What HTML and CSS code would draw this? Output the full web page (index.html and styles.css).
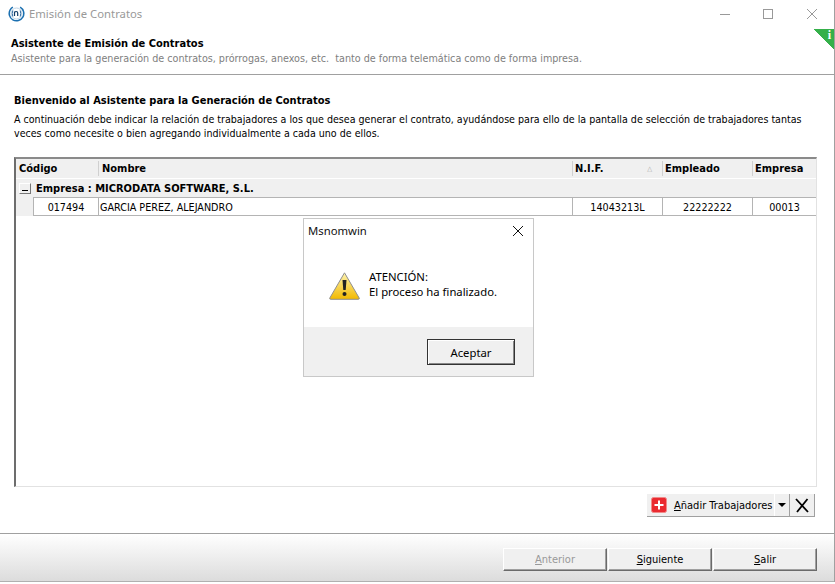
FILE: index.html
```html
<!DOCTYPE html>
<html lang="es">
<head>
<meta charset="utf-8">
<title>Emisión de Contratos</title>
<link rel="stylesheet" href="styles.css">
</head>
<body>
<div class="window">
  <div class="titlebar">
    <svg class="app-icon" width="17" height="17" viewBox="0 0 17 17">
      <circle cx="8.500" cy="8.500" r="7.300" fill="none" stroke="#1a6fb0" stroke-width="1.500" stroke-dasharray="38 8" transform="rotate(-60 8.500 8.500)"/>
      <circle cx="8.500" cy="8.500" r="5.500" fill="#fff" stroke="#a9c6de" stroke-width="0.800"/>
      <path d="M4.800 5.500q-1.200 3 0 6M12.200 5.500q1.200 3 0 6" fill="none" stroke="#1a5a96" stroke-width="0.900"/>
      <path d="M6.500 11V6.500M6.500 7.500c.5-.7 1-1 1.700-1 1 0 1.500.6 1.500 1.600V11" fill="none" stroke="#123e6a" stroke-width="1.200"/>
    </svg>
    <span class="title-text">Emisión de Contratos</span>
    <div class="win-controls">
      <svg width="12" height="12" viewBox="0 0 12 12"><path d="M2 6.500h10" stroke="#999" stroke-width="1"/></svg>
      <svg width="12" height="12" viewBox="0 0 12 12"><rect x="1.500" y="1.500" width="9" height="9" fill="none" stroke="#999"/></svg>
      <svg width="12" height="12" viewBox="0 0 12 12"><path d="M1 1l10 10M11 1L1 11" stroke="#999" stroke-width="1"/></svg>
    </div>
  </div>
  <header class="wizard-head">
    <div class="head-title">Asistente de Emisión de Contratos</div>
    <div class="head-sub">Asistente para la generación de contratos, prórrogas, anexos, etc.&nbsp; tanto de forma telemática como de forma impresa.</div>
    <div class="info-corner"><span>i</span></div>
  </header>
  <main class="content">
    <h1 class="welcome">Bienvenido al Asistente para la Generación de Contratos</h1>
    <p class="intro">A continuación debe indicar la relación de trabajadores a los que desea generar el contrato, ayudándose para ello de la pantalla de selección de trabajadores tantas veces como necesite o bien agregando individualmente a cada uno de ellos.</p>
    <section class="grid">
      <div class="grid-row grid-head">
        <div class="c c1">Código</div>
        <div class="c c2">Nombre</div>
        <div class="c c3">N.I.F.<span class="sort">△</span></div>
        <div class="c c4">Empleado</div>
        <div class="c c5">Empresa</div>
      </div>
      <div class="group-row">
        <span class="collapse"></span>
        <span class="group-label">Empresa : MICRODATA SOFTWARE, S.L.</span>
      </div>
      <div class="grid-row data-row">
        <div class="indent"></div>
        <div class="c c1b center">017494</div>
        <div class="c c2">GARCIA PEREZ, ALEJANDRO</div>
        <div class="c c3 center">14043213L</div>
        <div class="c c4 center">22222222</div>
        <div class="c c5 center">00013</div>
      </div>
    </section>
    <div class="toolbar-wrap">
      <div class="toolbar">
        <div class="tb-add">
          <svg width="16" height="16" viewBox="0 0 16 16"><rect x="0.500" y="0.500" width="15" height="15" rx="2" fill="#ea2a30" stroke="#f08a8a"/><path d="M8 3.500v9M3.500 8h9" stroke="#fff" stroke-width="2"/></svg>
          <span class="tb-label"><u>A</u>ñadir Trabajadores</span>
        </div>
        <div class="tb-drop"><span class="caret"></span></div>
        <div class="tb-del">
          <svg width="14" height="15" viewBox="0 0 14 15"><path d="M1 1l12 13M12.500 1L2 14" stroke="#000" stroke-width="1.800"/></svg>
        </div>
      </div>
    </div>
  </main>
  <footer class="footer">
    <button class="btn disabled" type="button"><u>A</u>nterior</button>
    <button class="btn" type="button"><u>S</u>iguiente</button>
    <button class="btn" type="button"><u>S</u>alir</button>
  </footer>
  <div class="dialog">
    <div class="dlg-title">
      <span>Msnomwin</span>
      <svg width="12" height="12" viewBox="0 0 12 12"><path d="M1 1l10 10M11 1L1 11" stroke="#111" stroke-width="1"/></svg>
    </div>
    <div class="dlg-body">
      <svg width="31" height="28" viewBox="0 0 31 28">
        <defs><linearGradient id="warn" x1="0" y1="0" x2="0" y2="1"><stop offset="0" stop-color="#fdf3b0"/><stop offset="1" stop-color="#f2b900"/></linearGradient></defs>
        <path d="M15.500 0.800L30.200 26Q30.800 27.300 29 27.300H2Q0.200 27.300 0.800 26Z" fill="url(#warn)" stroke="#8f8f8f"/>
        <path d="M13.500 8h4l-.8 10h-2.400z" fill="#222"/><circle cx="15.500" cy="22" r="2" fill="#222"/>
      </svg>
      <div class="dlg-msg">
        <div>ATENCIÓN:</div>
        <div>El proceso ha finalizado.</div>
      </div>
    </div>
    <div class="dlg-foot"><button class="btn dlg-btn" type="button">Aceptar</button></div>
  </div>
</div>
</body>
</html>
```
FILE: styles.css
```css
* { box-sizing: border-box; }
html, body { margin: 0; padding: 0; }
body { width: 835px; height: 584px; background: #fff; font-family: "DejaVu Sans Condensed", "DejaVu Sans", sans-serif; font-stretch: condensed; font-size: 10.7px; color: #000; overflow: hidden; }
.window { position: relative; width: 835px; height: 582px; border-right: 1px solid #a0a0a0; display: flex; flex-direction: column; background: #fff; }
.titlebar { height: 27px; display: flex; align-items: center; padding-left: 8px; flex: none; }
.app-icon { flex: none; }
.title-text { margin-left: 4px; font: 11.3px "Noto Sans", sans-serif; color: #999; }
.win-controls { margin-left: auto; align-self: flex-start; display: flex; gap: 32px; padding: 8px 16px 0 0; }
.wizard-head { position: relative; height: 48px; border-bottom: 1px solid #a0a0a0; padding: 9px 0 0 11px; flex: none; }
.head-title { font-size: 11px; font-weight: 700; line-height: 15px; }
.head-sub { color: #808080; line-height: 15px; }
.info-corner { position: absolute; right: 0; top: 2px; width: 20px; height: 20px; background: linear-gradient(to top right, transparent 50%, #35b04a 50%); }
.info-corner span { position: absolute; right: 3px; top: -1px; color: #fff; font: 700 12px/14px "Liberation Serif", serif; }
.content { flex: 1; padding: 18px 17px 0 14px; display: flex; flex-direction: column; min-height: 0; }
.welcome { margin: 0; font-size: 11px; font-weight: 700; line-height: 16px; }
.intro { margin: 3px 0 0; font-size: 10.600px; line-height: 14px; width: 800px; }
.grid { margin: 17px 0 0; height: 330px; border: 1px solid #e2e2e2; border-left: 2px solid #6d6d6d; border-top: 2px solid #8a8a8a; flex: none; }
.grid-row { display: flex; }
.grid-head { height: 20px; background: #f0f0f0; font-size: 11px; font-weight: 700; align-items: stretch; border-bottom: 1px solid #fff; }
.c { display: flex; align-items: center; padding-left: 1px; white-space: nowrap; }
.grid-head .c { border-left: 1px solid #d0d0d0; margin: 2px 0; padding-left: 2px; }
.grid-head .c1 { border-left: 0; padding-left: 3px; }
.grid-head .c2 { padding-left: 3px; }
.c1 { width: 82px; }
.c1b { width: 65px; }
.c2 { width: 474px; }
.c3 { width: 90px; position: relative; }
.c4 { width: 90px; }
.c5 { width: 64px; }
.sort { position: absolute; right: 10px; font-size: 7px; font-weight: 400; color: #aaa; }
.group-row { height: 18px; background: #f0f0f0; display: flex; align-items: center; padding-left: 3px; font-size: 11px; font-weight: 700; }
.collapse { width: 12px; height: 11px; position: relative; border: 1px solid; border-color: #fff #777 #777 #fff; background: #f0f0f0; margin-right: 5px; }
.collapse::after { content: ""; position: absolute; left: 2px; top: 6px; width: 6px; height: 1px; background: #000; }
.data-row { height: 19px; background: #f0f0f0; }
.indent { width: 17px; flex: none; background: #f0f0f0; }
.data-row .c { background: #fff; border-left: 1px solid #b4b4b4; border-top: 1px solid #b4b4b4; border-bottom: 1px solid #b4b4b4; padding-top: 1px; }
.center { justify-content: center; padding-left: 0; }
.toolbar-wrap { display: flex; justify-content: flex-end; margin: 7px 2px 0 0; }
.toolbar { display: flex; height: 23px; background: #f0f0f0; border-bottom: 1px solid #a0a0a0; }
.tb-add { display: flex; align-items: center; width: 127px; padding-left: 4px; gap: 7px; white-space: nowrap; font-size: 11px; }
.tb-drop { width: 15px; display: flex; align-items: center; justify-content: center; border-left: 1px solid #fff; }
.caret { width: 0; height: 0; border-style: solid; border-width: 4px 4px 0; border-color: #000 transparent transparent; }
.tb-del { width: 26px; display: flex; align-items: center; justify-content: center; border-left: 1px solid #a0a0a0; border-right: 1px solid #a0a0a0; }
.footer { flex: none; height: 49px; margin-top: auto; border-top: 1px solid #a0a0a0; border-bottom: 1px solid #b0b0b0; background: linear-gradient(#fff, #dcdcdc); display: flex; justify-content: flex-end; align-items: flex-start; gap: 1px; padding: 14px 17px 0 0; }
.btn { width: 104px; height: 23px; padding: 0; font: inherit; font-size: 11px; color: #000; background: #f0f0f0; border: 1px solid; border-color: #fff #6a6a6a #6a6a6a #fff; box-shadow: inset -1px -1px 0 #a0a0a0; }
.btn.disabled { color: #999; }
.dialog { position: absolute; left: 303px; top: 218px; width: 231px; height: 159px; background: #fff; border: 1px solid #c8c8c8; display: flex; flex-direction: column; }
.dlg-title { height: 23px; flex: none; display: flex; align-items: center; justify-content: space-between; padding: 0 9px 0 4px; font: 11.3px "Noto Sans", sans-serif; color: #111; }
.dlg-body { flex: 1; display: flex; align-items: flex-start; padding: 30px 0 0 25px; gap: 9px; }
.dlg-msg { font: 11.3px/15px "Noto Sans", sans-serif; margin-top: -3px; }
.dlg-foot { height: 49px; flex: none; background: #f0f0f0; display: flex; justify-content: flex-end; align-items: flex-start; padding: 12px 18px 0 0; }
.dlg-btn { width: 88px; height: 26px; font: 11.3px "Noto Sans", sans-serif; border: 1px solid #333; box-shadow: inset 1px 1px 0 #fff, inset -1px -1px 0 #888; }
```
